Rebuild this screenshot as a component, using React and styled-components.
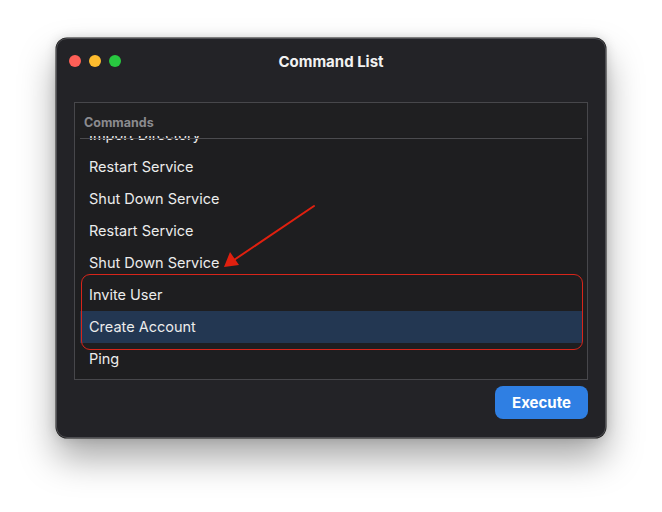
import styled, { createGlobalStyle } from 'styled-components';

const Global = createGlobalStyle`
  html, body { margin: 0; padding: 0; background: #ffffff; }
  body { font-family: Inter, "Liberation Sans", sans-serif; -webkit-font-smoothing: antialiased; }
`;

const commands = [
  'Import Directory',
  'Restart Service',
  'Shut Down Service',
  'Restart Service',
  'Shut Down Service',
  'Invite User',
  'Create Account',
  'Ping',
];

export default function App () {
  return (
    <Page>
      <Global />
      <Window>
        <TitleBar>
          <Lights>
            <Light color='#fe5f57' />
            <Light color='#febc2e' />
            <Light color='#28c840' />
          </Lights>
          <Title>Command List</Title>
        </TitleBar>
        <Body>
          <ListBox>
            <Header>Commands</Header>
            <HeaderLine />
            <Viewport>
              <Rows>
                {commands.map((c, i) => (
                  <Row key={i} selected={c === 'Create Account'}>{c}</Row>
                ))}
              </Rows>
            </Viewport>
            <Callout />
            <Arrow width='100' height='70' viewBox='0 0 100 70'>
              <line x1='92' y1='2' x2='12' y2='56' stroke='#e0200f' strokeWidth='2' strokeLinecap='round' />
              <polygon points='2,63 8,48 17,61' fill='#e0200f' />
            </Arrow>
          </ListBox>
          <Footer>
            <Button>Execute</Button>
          </Footer>
        </Body>
      </Window>
    </Page>
  );
}

const Page = styled.div`
  width: 662px;
  height: 512px;
  padding: 38px 0 0 56px;
  box-sizing: border-box;
`;

const Window = styled.div`
  width: 550px;
  height: 400px;
  box-sizing: border-box;
  background: #232327;
  border-radius: 11px;
  border: 1px solid #4e4e52;
  box-shadow: 0 0 0 0.5px #1a1a1a, 0 20px 36px rgba(0, 0, 0, 0.35), 0 0 12px rgba(0, 0, 0, 0.15);
  display: flex;
  flex-direction: column;
`;

const TitleBar = styled.div`
  height: 44px;
  display: flex;
  align-items: center;
  position: relative;
  padding: 0 0 0 12px;
`;

const Lights = styled.div`
  display: flex;
  gap: 8px;
`;

const Light = styled.span`
  width: 12px;
  height: 12px;
  border-radius: 50%;
  background: ${p => p.color};
`;

const Title = styled.div`
  position: absolute;
  left: 0;
  right: 0;
  text-align: center;
  color: #f2f2f2;
  font-weight: 700;
  font-size: 15px;
  pointer-events: none;
`;

const Body = styled.div`
  flex: 1;
  padding: 19px 17px 18px 17px;
  display: flex;
  flex-direction: column;
`;

const ListBox = styled.div`
  position: relative;
  height: 278px;
  box-sizing: border-box;
  border: 1px solid #47474b;
  background: #1e1e20;
`;

const Header = styled.div`
  position: absolute;
  top: 0;
  left: 0;
  right: 0;
  height: 33px;
  z-index: 2;
  background: #1f1f21;
  color: #8b8b8f;
  font-size: 12.5px;
  font-weight: 700;
  padding: 12px 0 0 9px;
  box-sizing: border-box;
`;

const HeaderLine = styled.div`
  position: absolute;
  top: 35px;
  left: 5px;
  right: 5px;
  height: 1px;
  background: #4b4b4f;
  z-index: 3;
`;

const Viewport = styled.div`
  height: 100%;
  overflow: hidden;
  padding: 0 5px;
`;

const Rows = styled.div`
  margin-top: 16px;
  display: flex;
  flex-direction: column;
`;

const Row = styled.div`
  height: 32px;
  line-height: 32px;
  padding-left: 9px;
  font-size: 14.5px;
  color: #ececec;
  background: ${p => p.selected ? '#233752' : 'transparent'};
`;

const Callout = styled.div`
  position: absolute;
  left: 6px;
  top: 171px;
  width: 502px;
  height: 76px;
  box-sizing: border-box;
  border: 1.5px solid #d8251a;
  border-radius: 9px;
  z-index: 4;
`;

const Arrow = styled.svg`
  position: absolute;
  left: 147px;
  top: 101px;
  z-index: 4;
`;

const Footer = styled.div`
  display: flex;
  justify-content: flex-end;
  padding-top: 6px;
`;

const Button = styled.button`
  width: 93px;
  height: 33px;
  border: none;
  border-radius: 8px;
  background: #2f7fe3;
  color: #ffffff;
  font-family: Inter, "Liberation Sans", sans-serif;
  font-size: 15px;
  font-weight: 700;
  padding: 0;
`;
